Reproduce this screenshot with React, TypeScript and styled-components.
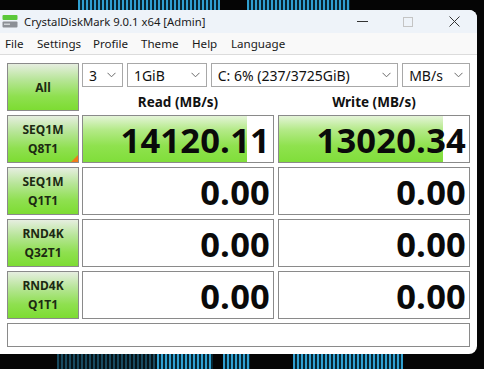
import { FC } from 'react';
import styled, { createGlobalStyle } from 'styled-components';

const GlobalStyle = createGlobalStyle`
  html, body {
    margin: 0;
    padding: 0;
    background: #050505;
    overflow: hidden;
  }
  body {
    font-family: 'Noto Sans', 'Open Sans', sans-serif;
  }
`;

const SPage = styled.div`
  width: 484px;
  height: 369px;
  display: flex;
  flex-direction: column;
  background: #050505;
`;

const SBand = styled.div<{ $h: number }>`
  position: relative;
  height: ${(p) => p.$h}px;
  flex: none;
`;

const SStripes = styled.div<{ $x: number; $w: number; $dim?: boolean }>`
  position: absolute;
  top: 0;
  bottom: 0;
  left: ${(p) => p.$x}px;
  width: ${(p) => p.$w}px;
  opacity: ${(p) => (p.$dim ? 0.45 : 1)};
  background: repeating-linear-gradient(
    90deg,
    #2f9fd0 0px,
    #2f9fd0 2px,
    #07242f 2px,
    #07242f 4px
  );
`;

const SMiddle = styled.div`
  display: flex;
  flex: none;
`;

const SWindow = styled.div`
  width: 477px;
  height: 344px;
  background: #ffffff;
  border-radius: 0 8px 8px 0;
  display: flex;
  flex-direction: column;
  overflow: hidden;
`;

const STitleBar = styled.div`
  height: 23px;
  display: flex;
  align-items: center;
  background: #eef3f9;
  color: #1a1a1a;
  font-size: 11.3px;
  padding-left: 2px;
`;

const STitle = styled.span`
  margin-left: 6px;
  flex: 1;
`;

const SControl = styled.div<{ $w: number }>`
  width: ${(p) => p.$w}px;
  display: flex;
  justify-content: center;
  align-items: center;
`;

const SMenuBar = styled.div`
  height: 21px;
  display: flex;
  align-items: center;
  background: #f9f9f9;
  border-bottom: 1px solid #dcdcdc;
  font-size: 11.6px;
  color: #1a1a1a;
  padding-left: 5px;
`;

const SMenuItem = styled.span<{ $w: number }>`
  width: ${(p) => p.$w}px;
`;

const SBody = styled.div`
  padding: 8px 7px 7px 7px;
  display: flex;
  flex-direction: column;
  gap: 4px;
`;

const SRow = styled.div`
  display: flex;
  height: 48px;
`;

const SButton = styled.div<{ $mark?: boolean }>`
  position: relative;
  width: 72px;
  height: 48px;
  box-sizing: border-box;
  border: 1px solid #8a8a8a;
  background: linear-gradient(180deg, #e6eee0 0%, #b6e596 35%, #8fe050 70%, #7ddc32 100%);
  display: flex;
  flex-direction: column;
  justify-content: center;
  align-items: center;
  font-size: 12px;
  font-weight: 700;
  line-height: 19px;
  color: #1c2a12;
  flex: none;
  &::after {
    content: '';
    display: ${(p) => (p.$mark ? 'block' : 'none')};
    position: absolute;
    right: 0;
    bottom: 0;
    border-style: solid;
    border-width: 0 0 7px 7px;
    border-color: transparent transparent #f07a1a transparent;
  }
`;

const SRightCol = styled.div`
  margin-left: 3px;
  display: flex;
  flex-direction: column;
  width: 388px;
`;

const SControls = styled.div`
  display: flex;
  gap: 4px;
  height: 24px;
`;

const SSelect = styled.div<{ $w: number }>`
  width: ${(p) => p.$w}px;
  height: 24px;
  box-sizing: border-box;
  border: 1px solid #a8a8a8;
  background: #fff;
  display: flex;
  align-items: center;
  padding: 0 6px 0 6px;
  font-size: 14px;
  color: #111;
  & > span {
    flex: 1;
    white-space: nowrap;
  }
`;

const SHeaders = styled.div`
  display: flex;
  gap: 4px;
  height: 24px;
  align-items: center;
`;

const SHeader = styled.div`
  width: 192px;
  text-align: center;
  font-size: 13.5px;
  font-weight: 700;
  color: #111;
  padding-top: 6px;
`;

const SCell = styled.div<{ $gap: number }>`
  position: relative;
  width: 192px;
  height: 48px;
  margin-left: ${(p) => p.$gap}px;
  box-sizing: border-box;
  border: 1px solid #8a8a8a;
  background: #fff;
  flex: none;
`;

const SBar = styled.div`
  position: absolute;
  left: 0;
  top: 0;
  bottom: 0;
  background: linear-gradient(180deg, #e4f4d8 0%, #b4ea88 30%, #8fe24e 65%, #80de3a 100%);
`;

const SValue = styled.div`
  position: relative;
  height: 100%;
  display: flex;
  align-items: center;
  justify-content: flex-end;
  padding-right: 3px;
  font-family: 'Open Sans', 'Noto Sans', sans-serif;
  font-size: 34.5px;
  font-weight: 700;
  color: #0a0a0a;
  letter-spacing: 0.2px;
`;

const SStatus = styled.div`
  height: 24px;
  box-sizing: border-box;
  border: 1px solid #8a8a8a;
  background: #fff;
`;

const Chevron: FC = () => (
  <svg width="9" height="6" viewBox="0 0 9 6">
    <path d="M0.5 0.8 L4.5 4.8 L8.5 0.8" fill="none" stroke="#6a6a6a" strokeWidth="1" />
  </svg>
);

const AppIcon: FC = () => (
  <svg width="16" height="15" viewBox="0 0 16 15">
    <rect x="0.5" y="1" width="15" height="5" rx="1" fill="#5cc83a" />
    <rect x="0.5" y="7.5" width="15" height="6" rx="1" fill="#8c9096" />
    <rect x="2" y="9.5" width="6" height="1.5" fill="#d0d4d8" />
  </svg>
);

const rows = [
  { a: 'SEQ1M', b: 'Q8T1', read: '14120.11', write: '13020.34', rb: 164, wb: 164, mark: true },
  { a: 'SEQ1M', b: 'Q1T1', read: '0.00', write: '0.00', rb: 0, wb: 0 },
  { a: 'RND4K', b: 'Q32T1', read: '0.00', write: '0.00', rb: 0, wb: 0 },
  { a: 'RND4K', b: 'Q1T1', read: '0.00', write: '0.00', rb: 0, wb: 0 },
];

const menu: [string, number][] = [
  ['File', 32],
  ['Settings', 56],
  ['Profile', 48],
  ['Theme', 51],
  ['Help', 39],
  ['Language', 70],
];

const App: FC = () => {
  return (
    <SPage>
      <GlobalStyle />
      <SBand $h={10}>
        <SStripes $x={78} $w={142} />
        <SStripes $x={247} $w={103} />
      </SBand>
      <SMiddle>
        <SWindow>
          <STitleBar>
            <AppIcon />
            <STitle>CrystalDiskMark 9.0.1 x64 [Admin]</STitle>
            <SControl $w={46}>
              <svg width="11" height="2" viewBox="0 0 11 2">
                <rect width="11" height="1" fill="#333" />
              </svg>
            </SControl>
            <SControl $w={46}>
              <svg width="10" height="10" viewBox="0 0 10 10">
                <rect x="0.5" y="0.5" width="9" height="9" fill="none" stroke="#c4c4c4" />
              </svg>
            </SControl>
            <SControl $w={46}>
              <svg width="11" height="11" viewBox="0 0 11 11">
                <path d="M0.5 0.5 L10.5 10.5 M10.5 0.5 L0.5 10.5" stroke="#333" strokeWidth="1" />
              </svg>
            </SControl>
          </STitleBar>
          <SMenuBar>
            {menu.map(([m, w]) => (
              <SMenuItem key={m} $w={w}>
                {m}
              </SMenuItem>
            ))}
          </SMenuBar>
          <SBody>
            <SRow>
              <SButton>All</SButton>
              <SRightCol>
                <SControls>
                  <SSelect $w={41}>
                    <span>3</span>
                    <Chevron />
                  </SSelect>
                  <SSelect $w={80}>
                    <span>1GiB</span>
                    <Chevron />
                  </SSelect>
                  <SSelect $w={188}>
                    <span>C: 6% (237/3725GiB)</span>
                    <Chevron />
                  </SSelect>
                  <SSelect $w={68}>
                    <span>MB/s</span>
                    <Chevron />
                  </SSelect>
                </SControls>
                <SHeaders>
                  <SHeader>Read (MB/s)</SHeader>
                  <SHeader>Write (MB/s)</SHeader>
                </SHeaders>
              </SRightCol>
            </SRow>
            {rows.map((r, i) => (
              <SRow key={i}>
                <SButton $mark={r.mark}>
                  <span>{r.a}</span>
                  <span>{r.b}</span>
                </SButton>
                <SCell $gap={3}>
                  {r.rb > 0 && <SBar style={{ width: r.rb }} />}
                  <SValue>{r.read}</SValue>
                </SCell>
                <SCell $gap={4}>
                  {r.wb > 0 && <SBar style={{ width: r.wb }} />}
                  <SValue>{r.write}</SValue>
                </SCell>
              </SRow>
            ))}
            <SStatus />
          </SBody>
        </SWindow>
      </SMiddle>
      <SBand $h={15}>
        <SStripes $x={57} $w={100} $dim />
        <SStripes $x={157} $w={56} />
        <SStripes $x={223} $w={27} />
        <SStripes $x={293} $w={110} />
      </SBand>
    </SPage>
  );
};

export default App;
